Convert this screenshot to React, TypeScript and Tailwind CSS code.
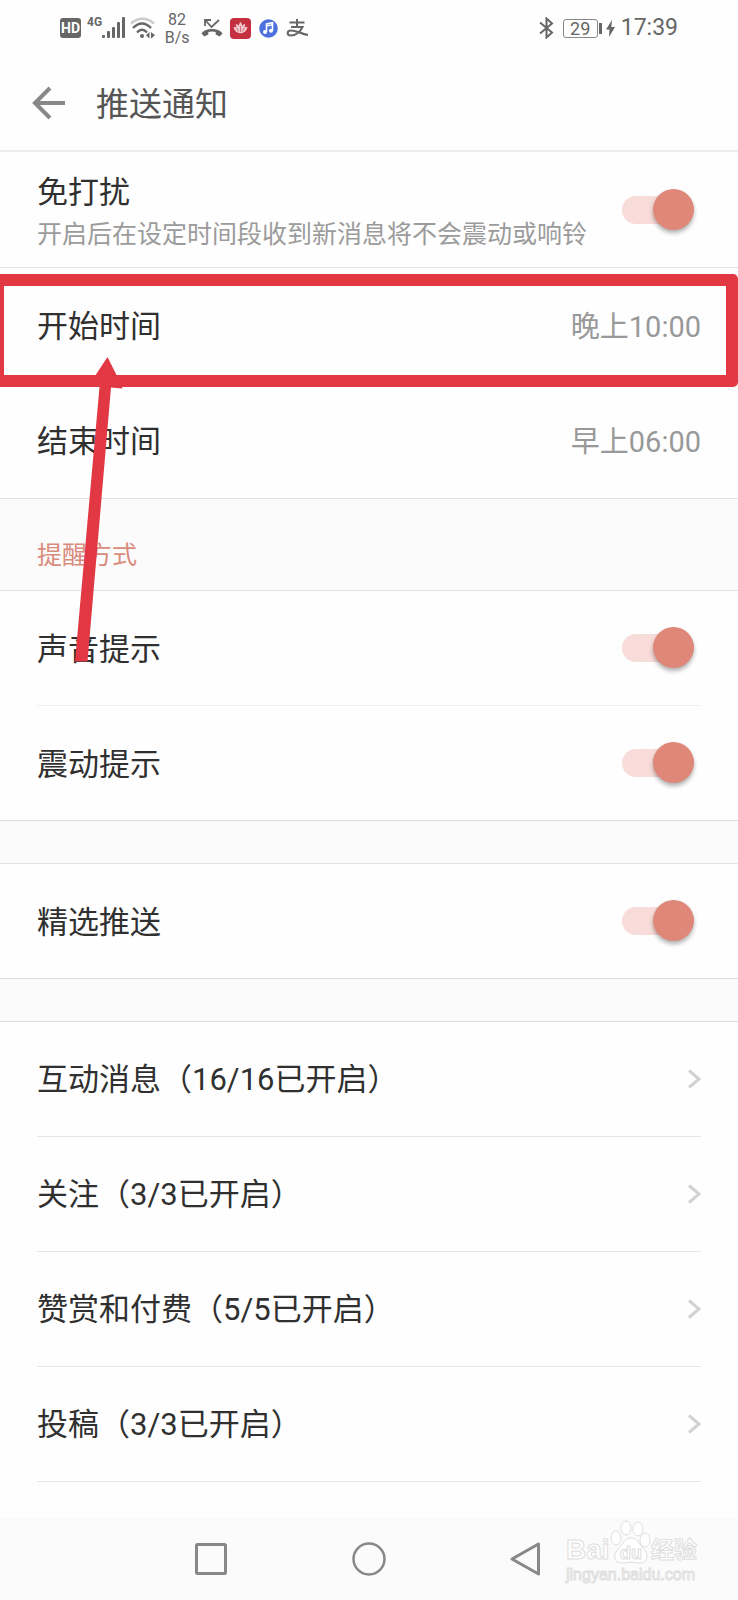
import React, { useState } from 'react';

const FONT = "font-[Roboto,'Noto_Sans_CJK_SC',sans-serif]";

const MESSAGE_GROUPS = [
    { id: 'interact', label: '互动消息（16/16已开启）' },
    { id: 'follow', label: '关注（3/3已开启）' },
    { id: 'reward', label: '赞赏和付费（5/5已开启）' },
    { id: 'submit', label: '投稿（3/3已开启）' },
];

interface SwitchProps {
    id: string;
    checked: boolean;
    onChange: () => void;
}

/** 开关 */
function Switch({ id, checked, onChange }: SwitchProps) {
    return (
        <input
            id={id}
            type="checkbox"
            checked={checked}
            onChange={onChange}
            className="relative mr-[7px] h-7 w-[72px] shrink-0 cursor-pointer appearance-none rounded-full bg-gray-200 checked:bg-[#f8dcd9] before:absolute before:-top-[7px] before:left-0 before:size-[41px] before:rounded-full before:bg-gray-400 before:shadow-[0_3px_4px_rgba(0,0,0,0.3)] checked:before:left-[31px] checked:before:bg-[#df8879]"
        />
    );
}

interface SwitchRowProps extends SwitchProps {
    label: string;
    last?: boolean;
}

function SwitchRow({ label, last = false, ...rest }: SwitchRowProps) {
    return (
        <div className={last ? 'border-b border-[#dcdcdc] px-[37px]' : 'px-[37px]'}>
            <div className={`flex items-center justify-between ${last ? 'h-[114px]' : 'h-[115px] border-b border-[#f0f0f0]'}`}>
                <label htmlFor={rest.id} className="pt-1 text-[31px]">{label}</label>
                <Switch {...rest} />
            </div>
        </div>
    );
}

function TimeRow({ label, value }: { label: string; value: string }) {
    return (
        <button type="button" className="flex h-[115px] w-full items-center justify-between px-[37px] pt-1">
            <span className="text-[31px]">{label}</span>
            <span className="text-[29px] text-[#999]">{value}</span>
        </button>
    );
}

/** 系统状态栏 */
function StatusBar() {
    return (
        <div className="flex h-14 items-center justify-between px-[60px] text-[#666]">
            <div className="flex items-center">
                <span className="flex h-5 w-[21px] items-center justify-center rounded-[3px] bg-[#666] text-[14px] font-bold text-white">HD</span>
                <span className="ml-[6px] self-start pt-1 text-[12px] leading-4 font-bold">4G</span>
                <svg width="24" height="22" viewBox="0 0 24 22" fill="currentColor">
                    <rect x="0" y="18" width="3" height="3" rx="1" />
                    <rect x="5" y="14" width="3" height="7" rx="1" />
                    <rect x="10" y="10" width="3" height="11" rx="1" />
                    <rect x="15" y="5" width="3" height="16" rx="1" />
                    <rect x="20" y="0" width="3" height="21" rx="1" />
                </svg>
                <svg className="ml-1" width="25" height="22" viewBox="0 0 25 22" fill="none" stroke="currentColor" strokeWidth="2.4">
                    <path d="M1 6.500Q12.500-3 24 6.500" stroke="#ccc" />
                    <path d="M3 11Q12 2 21 11" />
                    <path d="M7 15.500Q12 10 17 15.500" />
                    <circle cx="12" cy="19" r="2" fill="currentColor" stroke="none" />
                    <path d="M19.500 15v6.500l-3.500-3.200zM21 15v6.500l4-3.200z" fill="currentColor" stroke="none" />
                </svg>
                <span className="ml-[10px] flex w-6 flex-col items-center pt-px text-[16px] leading-[18px]">
                    <span>82</span>
                    <span>B/s</span>
                </span>
                <svg className="ml-3" width="22" height="20" viewBox="0 0 22 20" fill="none" stroke="currentColor" strokeWidth="1.800">
                    <path d="M4 8V2h6M4.500 2.500l6 6.500L18 2" />
                    <path d="M.500 15.500C3 12 7 11 11 11s8 1 10.500 4.500l-2.800 3-4-2v-2.500c-2-.700-5.400-.700-7.400 0v2.500l-4 2z" fill="currentColor" stroke="none" />
                </svg>
                <svg className="ml-[7px]" width="21" height="21" viewBox="0 0 21 21">
                    <rect width="21" height="21" rx="4" fill="#c4303f" />
                    <path d="M10.500 4c1.300 1.500 1.700 2.800 1.700 4 .8-1.200 1.800-1.800 3-2 0 1.200-.2 2.200-.7 3.200 1-.4 2-.4 3 0-1 3.800-3.500 6-7 6s-6-2.200-7-6c1-.4 2-.4 3 0-.5-1-.7-2-.7-3.200 1.200.2 2.200.8 3 2 0-1.200.4-2.500 1.700-4z" fill="#f0c9cd" />
                    <path d="M10.500 14V8M8.500 13.500l-2-4M12.500 13.500l2-4" stroke="#c4303f" strokeWidth=".6" />
                </svg>
                <svg className="ml-2" width="19" height="19" viewBox="0 0 19 19">
                    <circle cx="9.500" cy="9.500" r="9.300" fill="#4c70dc" />
                    <path d="M7.500 13V5l6-1.300v7.800M7.500 7l6-1.300" fill="none" stroke="#fff" strokeWidth="1.600" />
                    <circle cx="6" cy="13" r="2" fill="#fff" />
                    <circle cx="12" cy="11.800" r="2" fill="#fff" />
                </svg>
                <svg className="ml-2" width="23" height="20" viewBox="0 0 23 20" fill="none" stroke="currentColor" strokeWidth="2">
                    <path d="M3.500 4.500h15M11 1v7.500M5 9h11.500C14.500 13.500 10 17.500 5 17.500c-4.500 0-4.500-5 0-5 5.500 0 10 3.500 17 4.500" />
                </svg>
            </div>
            <div className="flex items-center">
                <svg width="15" height="22" viewBox="0 0 15 22" fill="none" stroke="currentColor" strokeWidth="2">
                    <path d="M1 5.500l12 10L7.500 20.500v-19l5.500 5L1 16.500" />
                </svg>
                <span className="ml-[9px] flex h-[19px] w-[35px] items-center justify-center rounded-[3px] border border-[#888] text-[18px]">29</span>
                <span className="ml-px h-[11px] w-[3px] bg-[#666]" />
                <svg className="ml-1" width="9" height="17" viewBox="0 0 9 17" fill="currentColor">
                    <path d="M6 0L0 9.500h3.500L3 17l6-10H5.300z" />
                </svg>
                <span className="ml-[6px] pt-px text-[23px]">17:39</span>
            </div>
        </div>
    );
}

/** 红框与箭头，标出「开始时间」 */
function Highlight() {
    return (
        <>
            <div className="pointer-events-none absolute inset-x-0 top-[6px] -bottom-1 rounded-r-[5px] border-y-[12px] border-r-[12px] border-l-4 border-[#e23843]" />
            <svg className="pointer-events-none absolute top-[88px] left-[70px]" width="60" height="310" viewBox="0 0 60 310" fill="#e23843">
                <path d="M37.500 1L47 20L52.500 32.500L41 31.500L17.500 305.500H5L29.500 31L23 31L25 20z" />
            </svg>
        </>
    );
}

/** 系统导航栏 */
function NavBar() {
    return (
        <nav className="relative mt-auto flex h-[82px] items-center justify-center bg-[#fbfbfb] text-[#888]">
            <button type="button" aria-label="最近任务" className="flex w-[157px] justify-center">
                <svg width="34" height="36" viewBox="0 0 34 36" fill="none" stroke="currentColor" strokeWidth="3">
                    <rect x="1.500" y="3.500" width="29" height="29" rx="1" />
                </svg>
            </button>
            <button type="button" aria-label="主屏幕" className="flex w-[157px] justify-center">
                <svg width="36" height="36" viewBox="0 0 36 36" fill="none" stroke="currentColor" strokeWidth="2.500">
                    <circle cx="18" cy="18" r="15.500" />
                </svg>
            </button>
            <button type="button" aria-label="返回" className="flex w-[157px] justify-center">
                <svg width="34" height="36" viewBox="0 0 34 36" fill="none" stroke="currentColor" strokeWidth="3" strokeLinejoin="round">
                    <path d="M29.500 3v30L3 18z" />
                </svg>
            </button>
            <svg className="absolute right-[38px] bottom-[15px]" width="136" height="66" viewBox="0 0 136 66" fill="#fff" stroke="#dedede" strokeWidth="1">
                <text x="2" y="40" fontSize="28" fontWeight="700" fontFamily="Liberation Sans">Bai</text>
                <ellipse cx="52" cy="19" rx="5" ry="7" />
                <ellipse cx="62" cy="9" rx="5" ry="7" />
                <ellipse cx="74" cy="10" rx="5" ry="7" />
                <ellipse cx="81" cy="21" rx="5" ry="7" />
                <path d="M67 19c7 0 8 7 13 11 5 5 4 14-4 14-4 0-6-1-9-1s-5 1-9 1c-9 0-9-9-4-14 5-4 6-11 13-11z" />
                <text x="56" y="40" fontSize="18" fontWeight="700" fontFamily="Liberation Sans">du</text>
                <text x="87" y="39" fontSize="23" fontWeight="700" fontFamily="Noto Sans CJK SC">经验</text>
                <text x="2" y="61" fontSize="16" fontFamily="Liberation Sans">jingyan.baidu.com</text>
            </svg>
        </nav>
    );
}

export default function App() {
    const [settings, setSettings] = useState({ quiet: true, sound: true, vibrate: true, featured: true });

    const toggle = (key: keyof typeof settings) => {
        setSettings(prev => ({ ...prev, [key]: !prev[key] }));
    };

    return (
        <div className={`flex min-h-screen w-full flex-col bg-[#fefefe] text-[#303030] ${FONT}`}>
            <StatusBar />

            <header className="flex h-24 items-center border-b-2 border-[#ececec] pl-8">
                <button type="button" aria-label="返回">
                    <svg width="34" height="34" viewBox="0 0 34 34" fill="none" stroke="#888" strokeWidth="4">
                        <path d="M33 17H3M18 2L3 17l15 15" />
                    </svg>
                </button>
                <h1 className="ml-[30px] pt-1 text-[33px] text-[#555]">推送通知</h1>
            </header>

            <main>
                <div className="flex h-[116px] items-center justify-between border-b border-[#e4e4e4] px-[37px]">
                    <label htmlFor="quiet" className="flex flex-col pt-1">
                        <span className="text-[31px] leading-[46px]">免打扰</span>
                        <span className="text-[25px] leading-[38px] text-[#9b9b9b]">开启后在设定时间段收到新消息将不会震动或响铃</span>
                    </label>
                    <Switch id="quiet" checked={settings.quiet} onChange={() => toggle('quiet')} />
                </div>

                <div className="relative z-10">
                    <TimeRow label="开始时间" value="晚上10:00" />
                    <Highlight />
                </div>
                <TimeRow label="结束时间" value="早上06:00" />

                <h2 className="flex h-[93px] items-end border-y border-[#e2e2e2] bg-[#fbfbfb] px-[37px] pb-4 text-[25px] text-[#d98b7c]">提醒方式</h2>

                <SwitchRow id="sound" label="声音提示" checked={settings.sound} onChange={() => toggle('sound')} />
                <SwitchRow id="vibrate" label="震动提示" last checked={settings.vibrate} onChange={() => toggle('vibrate')} />
                <div className="h-[43px] border-b border-[#e4e4e4] bg-[#fbfbfb]" />
                <SwitchRow id="featured" label="精选推送" last checked={settings.featured} onChange={() => toggle('featured')} />
                <div className="h-[43px] border-b border-[#dcdcdc] bg-[#fbfbfb]" />

                <ul className="px-[37px]">
                    {MESSAGE_GROUPS.map(group => (
                        <li key={group.id} className="border-b border-[#e6e6e6]">
                            <a href={`#${group.id}`} className="flex h-[114px] items-center justify-between text-[31px]">
                                <span className="pt-0.5">{group.label}</span>
                                <svg width="14" height="20" viewBox="0 0 14 20" fill="none" stroke="#d2d2d2" strokeWidth="3">
                                    <path d="M2 1.500l10 8.500-10 8.500" />
                                </svg>
                            </a>
                        </li>
                    ))}
                </ul>
            </main>

            <NavBar />
        </div>
    );
}
